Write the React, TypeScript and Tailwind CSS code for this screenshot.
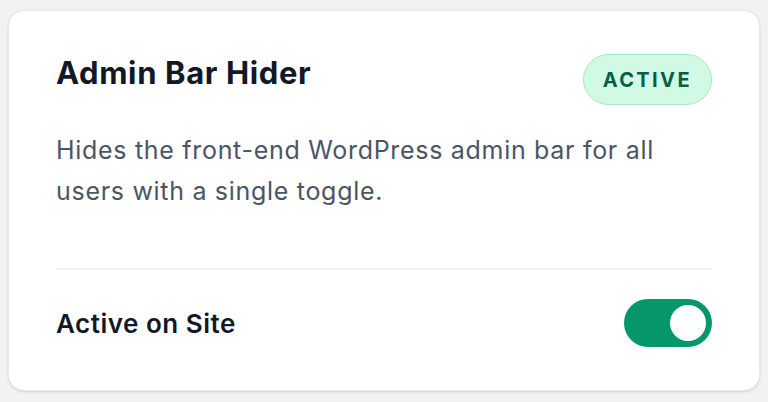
import { useState } from 'react';

const FONT = { fontFamily: 'Inter, "Noto Sans", sans-serif' };

function Toggle({ on, onChange }: { on: boolean; onChange: () => void }) {
  return (
    <button
      type="button"
      role="switch"
      aria-checked={on}
      onClick={onChange}
      className={`flex h-[48px] w-[88px] items-center rounded-full p-[6px] ${
        on ? 'justify-end bg-[#059669]' : 'justify-start bg-gray-300'
      }`}
    >
      <span className="h-[36px] w-[36px] rounded-full bg-white" />
    </button>
  );
}

export default function App() {
  const [active, setActive] = useState(true);

  return (
    <div className="min-h-[402px] bg-[#f1f2f4] px-[8px] pt-[10px] pb-[12px]" style={FONT}>
      <div className="rounded-[16px] border border-[#e6e8eb] bg-white px-[47px] pt-[43px] pb-[43px] shadow-sm">
        <div className="flex items-start justify-between">
          <h2 className="mt-[1px] text-[31px] leading-[36px] font-bold tracking-[0.02em] text-[#111827]">
            Admin Bar Hider
          </h2>
          <span className="flex h-[51px] items-center rounded-full border-[1.5px] border-[#a3e9c6] bg-[#d1fae5] px-[19px] text-[20px] font-bold tracking-[0.12em] text-[#065f46]">
            ACTIVE
          </span>
        </div>

        <p className="mt-[25px] max-w-[620px] text-[25px] leading-[41px] tracking-[0.028em] text-[#4b5563]">
          Hides the front-end WordPress admin bar for all users with a single toggle.
        </p>

        <div className="mt-[56px] h-[2px] bg-[#f1f3f5]" />

        <div className="flex items-center justify-between pt-[29px]">
          <span className="text-[26px] font-semibold tracking-[0.02em] text-[#111827]">Active on Site</span>
          <Toggle on={active} onChange={() => setActive((v) => !v)} />
        </div>
      </div>
    </div>
  );
}
